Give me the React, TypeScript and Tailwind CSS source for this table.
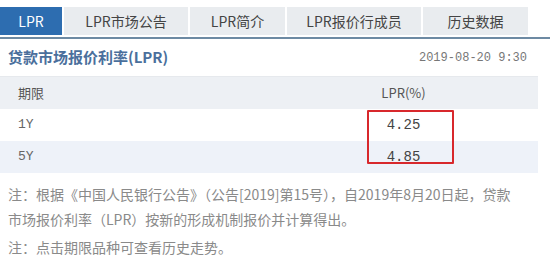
import React from 'react';

const tabs = ['LPR', 'LPR市场公告', 'LPR简介', 'LPR报价行成员', '历史数据'];
const tabWidths = ['w-[62px]', 'w-[124px]', 'w-[95px]', 'w-[134px]', 'w-[105px]'];

const rows = [
  { term: '1Y', rate: '4.25' },
  { term: '5Y', rate: '4.85' },
];

const cjk = "font-['Noto_Sans_CJK_SC',sans-serif]";
const mono = "font-['Liberation_Mono','Noto_Sans_CJK_SC',monospace]";

export default function App() {
  return (
    <div className={`w-[550px] h-[261px] bg-white overflow-hidden ${cjk}`}>
      {/* Tabs */}
      <div className="pt-[7px]">
        <div className="flex gap-[2px] h-[28px]">
          {tabs.map((t, i) => (
            <div
              key={t}
              className={`${tabWidths[i]} flex items-center justify-center text-[14px] ${
                i === 0 ? 'bg-[#2d6db0] text-white' : 'bg-[#e9ecef] text-[#444]'
              }`}
            >
              {t}
            </div>
          ))}
        </div>
        <div className="mt-[2px] h-[2px] bg-[#6d8aa3]" />
      </div>

      <div className="w-[538px]">
        {/* Title */}
        <div className="h-[38px] flex items-center justify-between pl-[8px] pr-[11px] border-b border-[#e6e9ed]">
          <span className="text-[15px] font-semibold text-[#4a6f9c]">贷款市场报价利率(LPR)</span>
          <span className={`text-[12px] text-[#777] ${mono}`}>2019-08-20 9:30</span>
        </div>

        {/* Table */}
        <div className="relative">
          <div className="grid grid-cols-2 h-[32px] items-center bg-[#edf0f4] text-[13px] text-[#555]">
            <span className="pl-[18px]">期限</span>
            <span className="text-center">LPR(%)</span>
          </div>
          {rows.map((r, i) => (
            <div
              key={r.term}
              className={`grid grid-cols-2 h-[32px] items-center text-[13px] text-[#666] ${mono} ${
                i === 1 ? 'bg-[#eef2f9]' : 'bg-white'
              }`}
            >
              <span className="pl-[18px]">{r.term}</span>
              <span className="text-center text-[14px] text-[#444]">{r.rate}</span>
            </div>
          ))}
          {/* red highlight box */}
          <div className="absolute left-[367px] top-[33px] w-[87px] h-[54px] border-2 border-[#d8282c] rounded-[1px]" />
        </div>
      </div>

      {/* Notes */}
      <div className="pl-[8px] pt-[9px] text-[14px] text-[#8a8a8a] leading-[25px] whitespace-nowrap">
        <div>注：根据《中国人民银行公告》（公告[2019]第15号），自2019年8月20日起，贷款</div>
        <div>市场报价利率（LPR）按新的形成机制报价并计算得出。</div>
        <div className="mt-[3px]">注：点击期限品种可查看历史走势。</div>
      </div>
    </div>
  );
}
